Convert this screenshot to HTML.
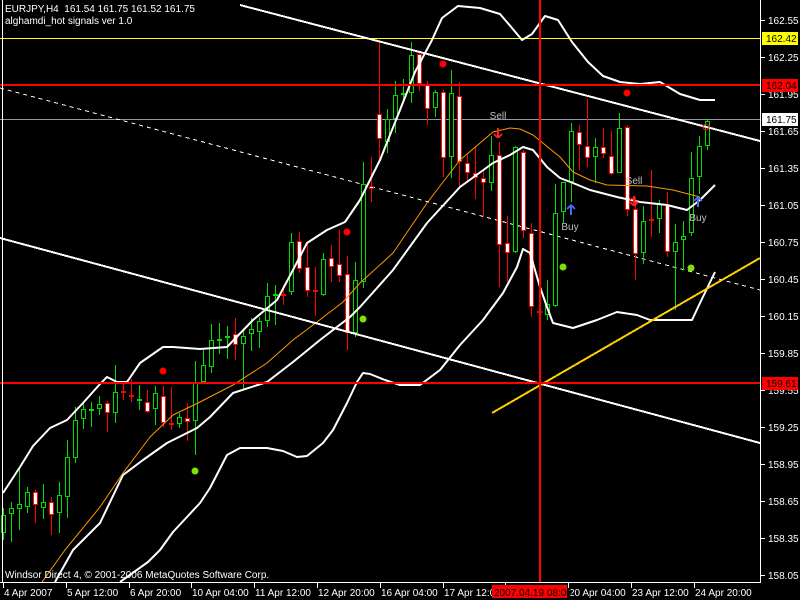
<!DOCTYPE html>
<html><head><meta charset="utf-8"><style>
html,body{margin:0;padding:0;background:#000;width:800px;height:600px;overflow:hidden}
svg{display:block}
text{font-family:"Liberation Sans",sans-serif;font-size:10px}
</style></head><body>
<svg id="s" width="800" height="600" xmlns="http://www.w3.org/2000/svg" shape-rendering="crispEdges">
<rect width="800" height="600" fill="#000"/>
<g id="g"></g>
</svg>
<script>
var C=[
['g',515,533,508,540],['g',508,514,502,542],['g',504,509,467,530],['g',492,507,487,513],['r',492,505,490,523],
['g',502,508,484,519],['r',502,515,497,535],['g',495,513,482,533],['g',457,497,440,518],['g',420,458,407,463],
['g',409,419,403,429],['g',409,410,402,427],['g',404,409,396,415],['r',403,413,401,432],['g',392,413,365,423],
['r',391,393,383,400],['r',395,396,379,402],['g',399,400,385,410],['r',402,412,390,413],['g',393,409,386,425],
['r',396,423,386,427],['r',423,425,387,430],['g',417,424,413,428],['r',418,422,403,441],['g',383,421,361,455],
['g',365,382,350,384],['g',340,367,324,373],['g',339,340,323,354],['g',336,338,326,359],['r',334,345,318,360],
['g',336,344,330,390],['g',329,334,318,351],['g',321,332,317,348],['g',296,321,283,327],['g',294,295,285,325],
['r',294,295,285,305],['g',242,292,233,295],['r',241,269,232,273],['r',267,291,243,297],['r',290,291,267,316],
['g',259,295,253,296],['r',258,267,245,282],['r',264,276,230,282],['r',274,333,256,350],['g',280,333,262,337],
['g',184,282,162,288],['r',186,189,157,202],['r',114,139,40,162],['g',119,142,109,153],['g',95,119,81,133],
['g',93,94,79,103],['g',55,93,42,103],['r',54,84,53,91],['r',85,109,81,125],['g',92,108,90,117],
['r',92,158,90,177],['g',93,157,70,178],['r',96,162,82,187],['r',163,173,153,183],['r',173,178,147,199],
['r',178,183,170,217],['g',155,183,136,191],['r',155,245,142,287],['r',243,253,216,282],['g',147,252,146,253],
['r',152,231,150,238],['r',233,307,223,317],['r',311,313,306,320],['g',304,315,280,320],['g',213,306,184,307],
['g',182,212,184,223],['g',131,182,123,202],['r',132,145,125,170],['r',146,158,99,167],['g',147,157,138,183],
['r',147,154,128,158],['r',156,174,131,175],['g',128,173,113,173],['r',127,210,125,216],['r',209,254,197,280],
['g',221,253,206,264],['r',219,220,170,237],['g',204,219,200,233],['r',205,252,192,257],['g',242,252,224,310],
['g',236,240,221,270],['g',178,233,152,236],['g',146,177,136,194],['g',121,146,120,150]
];
var h='';
function ln(x1,y1,x2,y2,c,w,d){h+='<line x1="'+x1+'" y1="'+y1+'" x2="'+x2+'" y2="'+y2+'" stroke="'+c+'" stroke-width="'+(w||1)+'"'+(d?' stroke-dasharray="'+d+'"':'')+'/>';}
function pl(p,c,w){h+='<polyline fill="none" stroke="'+c+'" stroke-width="'+w+'" stroke-linejoin="round" shape-rendering="auto" points="'+p+'"/>';}
function tx(x,y,t,c,a){h+='<text x="'+x+'" y="'+y+'" fill="'+c+'"'+(a?' text-anchor="'+a+'"':'')+'>'+t+'</text>';}
ln(0,38.5,760,38.5,'#ffff00',1);
ln(0,119.5,760,119.5,'#8a9aaa',1);
ln(0,88,760,290,'#fff',1,'4,4');
C.forEach(function(c,i){var x=3+8*i,col=c[0]=='g'?'#00dd00':'#ff0000';
 h+='<line x1="'+(x+0.5)+'" y1="'+c[3]+'" x2="'+(x+0.5)+'" y2="'+c[4]+'" stroke="'+col+'"/>';
 var ht=Math.max(1,c[2]-c[1]);
 if(ht<=2) h+='<rect x="'+(x-2)+'" y="'+c[1]+'" width="5" height="2" fill="'+col+'"/>';
 else h+='<rect x="'+(x-1.5)+'" y="'+(c[1]+0.5)+'" width="4" height="'+(ht-1)+'" fill="'+(c[0]=='g'?'#000':'#fff')+'" stroke="'+col+'" stroke-width="1"/>';
});
pl('3,493 20,467 33,446 50,428 67,420 83,403 100,384 107,377 117,382 127,382 140,363 163,347 173,347 200,349 227,347 253,320 277,300 293,270 307,243 327,230 345,222 360,200 380,160 400,110 415,72 432,40 442,18 458,6 480,8 500,14 512,28 522,40 532,34 545,16 558,20 572,42 588,62 603,76 620,82 640,84 660,82 680,94 700,100 715,100','#fff',2);
pl('55,582 73,550 100,523 123,475 143,460 167,443 197,428 210,417 233,393 267,382 293,362 320,340 333,330 350,317 360,307 393,270 427,223 460,187 493,163 510,155 523,147 533,150 547,167 560,178 573,183 590,190 617,197 640,202 667,205 687,210 700,200 715,185','#fff',2);
pl('120,582 148,562 160,550 173,532 200,503 210,488 227,455 240,448 267,448 283,451 297,457 307,456 323,443 333,430 347,403 357,382 363,373 370,374 385,380 400,385 420,385 440,370 460,345 483,320 503,293 517,267 523,249 530,253 540,287 547,307 553,323 573,328 597,320 617,312 637,315 650,320 673,320 692,320 700,303 715,272','#fff',2);
pl('42,582 65,550 100,507 123,473 150,437 173,415 200,402 233,385 267,363 293,340 317,322 343,302 360,283 393,253 427,203 460,160 493,132 510,128 520,129 533,135 560,157 573,172 590,180 607,185 647,186 673,190 700,197','#ff9900',1);
ln(240,5,760,141,'#fff',2);
ln(0,238,760,443,'#fff',2);
ln(492,413,760,258,'#ffcc00',2);
ln(0,85,760,85,'#ff0000',2);
ln(0,383,760,383,'#ff0000',2);
ln(540,0,540,582,'#ff0000',2);
[[163,371],[347,232],[443,64],[627,93]].forEach(function(p){h+='<circle cx="'+p[0]+'" cy="'+p[1]+'" r="3.5" fill="#ff0000" shape-rendering="auto"/>';});
[[195,471],[363,319],[563,267],[691,268]].forEach(function(p){h+='<circle cx="'+p[0]+'" cy="'+p[1]+'" r="3.5" fill="#80e000" shape-rendering="auto"/>';});
h+='<circle cx="633" cy="201" r="3" fill="none" stroke="#ff0000" shape-rendering="auto"/><circle cx="706" cy="127" r="3" fill="none" stroke="#ff0000" shape-rendering="auto"/>';
function arr(x,y,up,c){h+='<path d="M'+x+' '+(up?y:y+10)+' L'+(x-4)+' '+(up?y+4:y+6)+' M'+x+' '+(up?y:y+10)+' L'+(x+4)+' '+(up?y+4:y+6)+' M'+x+' '+y+' L'+x+' '+(y+10)+'" stroke="'+c+'" stroke-width="2" fill="none"/>';}
arr(498,128,false,'#ff2020');arr(634,196,false,'#ff2020');
arr(571,205,true,'#4a6aff');arr(698,197,true,'#4a6aff');
tx(498,119,'Sell','#c0c0c0','middle');tx(634,184,'Sell','#c0c0c0','middle');
tx(570,230,'Buy','#c0c0c0','middle');tx(698,221,'Buy','#c0c0c0','middle');
ln(2.5,0,2.5,582,'#fff',1);
ln(760.5,0,760.5,583,'#fff',1);
ln(0,582.5,761,582.5,'#fff',1);
var pr=['162.55','162.25','161.95','161.65','161.35','161.05','160.75','160.45','160.15','159.85','159.55','159.25','158.95','158.65','158.35','158.05'];
pr.forEach(function(p,i){var y=20+37*i;ln(761,y+0.5,765,y+0.5,'#fff',1);tx(768,y+4,p,'#fff');});
function lab(y,t,bg,fg){h+='<rect x="762" y="'+(y-6)+'" width="36" height="13" fill="'+bg+'"/>';tx(766,y+4,t,fg);}
lab(38,'162.42','#ffff00','#000');lab(85,'162.04','#ff0000','#000');lab(119,'161.75','#ffffff','#000');lab(383,'159.61','#ff0000','#000');
var tl=['4 Apr 2007','5 Apr 12:00','6 Apr 20:00','10 Apr 04:00','11 Apr 12:00','12 Apr 20:00','16 Apr 04:00','17 Apr 12:00','','20 Apr 04:00','23 Apr 12:00','24 Apr 20:00'];
tl.forEach(function(t,i){var x=Math.round(3+62.8*i);ln(x+0.5,583,x+0.5,588,'#fff',1);if(t)tx(x+1,596,t,'#fff');});
h+='<rect x="492" y="585" width="75" height="13" fill="#ff0000"/>';tx(494,596,'2007.04.19 08:00','#000');
tx(5,12,'EURJPY,H4&#160; 161.54 161.75 161.52 161.75','#fff');
tx(5,24,'alghamdi_hot signals ver 1.0','#fff');
tx(5,578,'Windsor Direct 4, © 2001-2006 MetaQuotes Software Corp.','#fff');
document.getElementById('g').innerHTML=h;
</script>
</body></html>
